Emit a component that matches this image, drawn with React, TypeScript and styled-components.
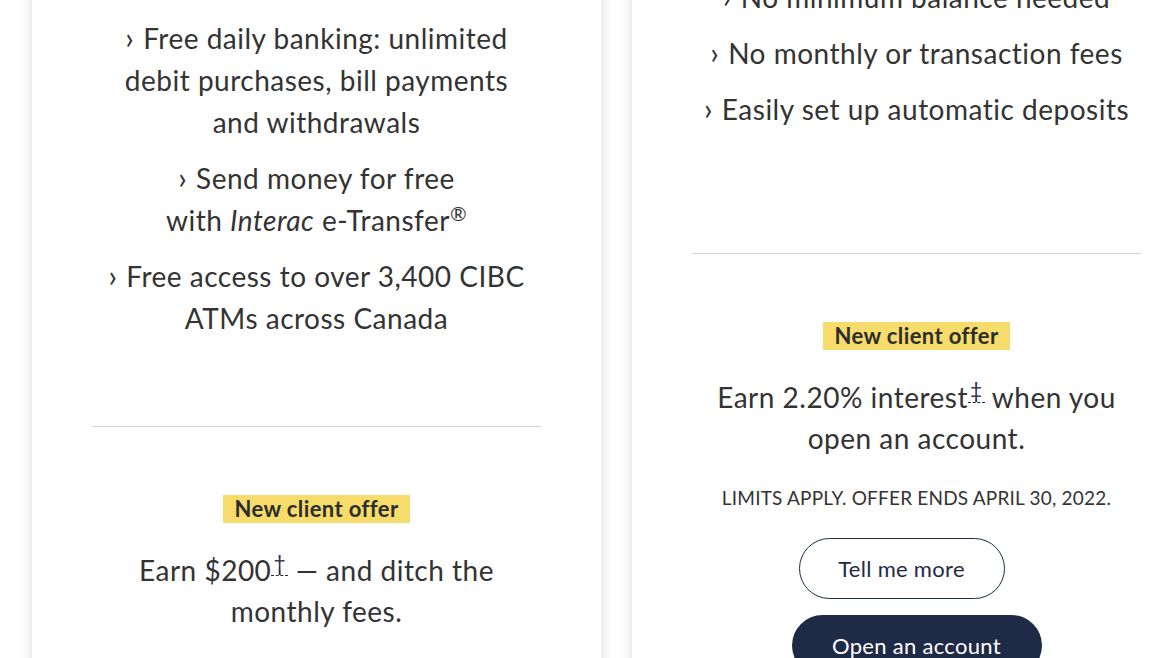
import styled, { createGlobalStyle } from "styled-components";

const GlobalStyle = createGlobalStyle`
  html, body {
    margin: 0;
    padding: 0;
    background: #fff;
    overflow: hidden;
  }
  body {
    font-family: Lato, "Open Sans", sans-serif;
    color: #333;
  }
`;

const navy = "#1f2a47";

const App = () => {
  return (
    <>
      <GlobalStyle />
      <Page>
        <Card>
          <Features $top={41} $bottom={87}>
            <Feature>
              <Arrow>›</Arrow>Free daily banking: unlimited
              <br />
              debit purchases, bill payments
              <br />
              and withdrawals
            </Feature>
            <Feature>
              <Arrow>›</Arrow>Send money for free
              <br />
              with <em>Interac</em> e-Transfer<Reg>®</Reg>
            </Feature>
            <Feature>
              <Arrow>›</Arrow>Free access to over 3,400 CIBC
              <br />
              ATMs across Canada
            </Feature>
          </Features>
          <Divider />
          <Offer>
            <Badge>New client offer</Badge>
            <OfferText>
              Earn $200<Note href="#">†</Note> — and ditch the
              <br />
              monthly fees.
            </OfferText>
          </Offer>
        </Card>

        <Card>
          <Features $top={0} $bottom={123}>
            <Feature>
              <Arrow>›</Arrow>No minimum balance needed
            </Feature>
            <Feature>
              <Arrow>›</Arrow>No monthly or transaction fees
            </Feature>
            <Feature>
              <Arrow>›</Arrow>Easily set up automatic deposits
            </Feature>
          </Features>
          <Divider />
          <Offer>
            <Badge>New client offer</Badge>
            <OfferText>
              Earn 2.20% interest<Note href="#">‡</Note> when you
              <br />
              open an account.
            </OfferText>
            <Limits>LIMITS APPLY. OFFER ENDS APRIL 30, 2022.</Limits>
            <Buttons>
              <Button $variant="secondary">Tell me more</Button>
              <Button $variant="primary">Open an account</Button>
            </Buttons>
          </Offer>
        </Card>
      </Page>
    </>
  );
};

export default App;

const Page = styled.div`
  display: flex;
  gap: 31px;
  padding-left: 32px;
  margin-top: -24px;
  width: 1300px;
`;

const Card = styled.div`
  width: 569px;
  flex-shrink: 0;
  box-sizing: border-box;
  padding: 0 60px 60px;
  background: #fff;
  box-shadow: 0 0 12px rgba(0, 0, 0, 0.16);
  min-height: 760px;
`;

const Features = styled.ul<{ $top: number; $bottom: number }>`
  list-style: none;
  margin: 0;
  padding: ${(p) => p.$top}px 0 ${(p) => p.$bottom}px;
  display: flex;
  flex-direction: column;
  gap: 14px;
`;

const Feature = styled.li`
  font-size: 28px;
  line-height: 42px;
  letter-spacing: 0.5px;
  text-align: center;
  color: #333;

  em {
    font-style: italic;
  }
`;

const Arrow = styled.span`
  font-size: 30px;
  line-height: 1;
  margin-right: 9px;
`;

const Reg = styled.sup`
  font-size: 20px;
  line-height: 0;
  vertical-align: 10px;
`;

const Divider = styled.hr`
  margin: 0;
  border: none;
  border-top: 1px solid #d2d2d2;
`;

const Offer = styled.div`
  display: flex;
  flex-direction: column;
  align-items: center;
  padding-top: 68px;
`;

const Badge = styled.span`
  background: #f6dc6b;
  color: #2d2d2d;
  font-size: 22px;
  font-weight: 700;
  letter-spacing: 0.4px;
  line-height: 28px;
  padding: 0 11px;
`;

const OfferText = styled.p`
  margin: 27px 0 0;
  font-size: 28px;
  line-height: 41px;
  letter-spacing: 0.5px;
  text-align: center;
  color: #333;
`;

const Note = styled.a`
  color: ${navy};
  text-decoration: none;
  font-size: 21px;
  line-height: 0;
  vertical-align: 10px;
  border-bottom: 1px dashed ${navy};
  padding: 0 2px;
`;

const Limits = styled.p`
  margin: 25px 0 0;
  font-size: 19px;
  line-height: 28px;
  letter-spacing: 0.2px;
  color: #333;
  text-align: center;
`;

const Buttons = styled.div`
  display: flex;
  flex-direction: column;
  align-items: center;
  gap: 16px;
  margin-top: 26px;
`;

const Button = styled.button<{ $variant: "primary" | "secondary" }>`
  font-family: Lato, "Open Sans", sans-serif;
  font-size: 22px;
  letter-spacing: 0.3px;
  height: 61px;
  border-radius: 31px;
  cursor: pointer;
  background: ${(p) => (p.$variant === "primary" ? navy : "#fff")};
  color: ${(p) => (p.$variant === "primary" ? "#fff" : navy)};
  border: ${(p) => (p.$variant === "primary" ? "none" : `1.5px solid ${navy}`)};
  width: ${(p) => (p.$variant === "primary" ? "250px" : "206px")};
  margin-right: ${(p) => (p.$variant === "primary" ? "0" : "30px")};
`;
